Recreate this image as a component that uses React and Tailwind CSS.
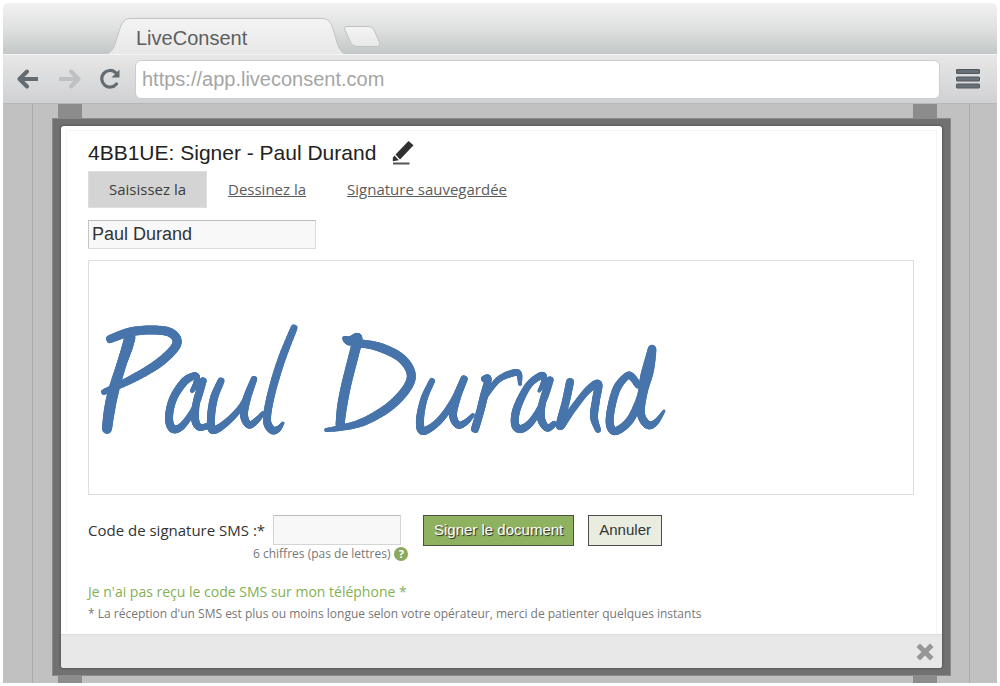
import React from "react";

// Pen samples of the signature: x, y and nib width.
const INK = [
  [[130, 337, 11], [127, 348, 11], [121, 366, 10], [113, 393, 11], [109, 413, 11], [107, 429, 10]],
  [[110, 339, 8], [130, 332, 9], [151, 330, 9], [169, 332, 9], [177, 340, 9], [173, 350, 9], [156, 365, 9], [130, 380, 8], [104, 392, 6]],
  [[192, 391, 4], [196, 384, 6], [197, 378, 6], [194, 376, 7], [184, 382, 8], [173, 399, 8], [169, 418, 8], [173, 429, 8], [183, 425, 7], [196, 405, 6], [203, 381, 7], [197, 399, 7], [195, 418, 8], [199, 427, 7], [208, 426, 6]],
  [[221, 381, 7], [214, 398, 8], [211, 418, 8], [213, 430, 8], [227, 422, 7], [243, 404, 6], [254, 379, 6], [247, 398, 8], [244, 415, 8], [249, 425, 7], [257, 420, 6], [263, 413, 4]],
  [[294, 328, 7], [281, 361, 8], [271, 395, 8], [267, 420, 8], [272, 430, 8], [278, 429, 6], [283, 423, 3]],
  [[344, 338, 3], [350, 341, 9], [357, 337, 8], [357, 342, 10], [352, 362, 10], [346, 386, 10], [342, 407, 10], [340, 425, 9]],
  [[356, 344, 9], [365, 344, 8], [382, 348, 9], [401, 358, 9], [411, 373, 9], [407, 388, 9], [389, 407, 9], [363, 422, 8], [340, 428, 6], [326, 430, 4]],
  [[432, 381, 6], [424, 399, 7], [420, 420, 8], [423, 431, 8], [438, 422, 7], [453, 402, 7], [464, 379, 7], [457, 397, 8], [453, 415, 8], [458, 425, 7], [466, 422, 6], [473, 415, 4]],
  [[484, 379, 6], [488, 379, 7], [484, 396, 8], [480, 412, 8], [475, 429, 8]],
  [[483, 399, 6], [498, 380, 6], [513, 373, 7], [519, 374, 6], [520, 384, 4]],
  [[539, 391, 3], [543, 384, 5], [544, 377, 6], [540, 376, 7], [528, 386, 7], [517, 408, 8], [515, 424, 8], [521, 429, 8], [532, 421, 7], [544, 400, 6], [550, 380, 7], [543, 400, 7], [541, 418, 8], [547, 428, 7], [554, 424, 6]],
  [[570, 382, 8], [566, 401, 8], [560, 426, 8], [572, 410, 7], [587, 391, 7], [598, 384, 8], [596, 400, 8], [594, 417, 8], [598, 430, 6]],
  [[638, 385, 7], [632, 377, 7], [627, 376, 7], [617, 388, 8], [611, 409, 8], [610, 425, 8], [616, 431, 8], [630, 420, 8], [641, 396, 8], [645, 375, 9], [652, 349, 8], [649, 370, 10], [643, 393, 9], [641, 414, 8], [648, 425, 8], [656, 422, 6], [664, 411, 3]],
];

// Catmull-Rom value between b and c.
const spline = (a, b, c, d, t) =>
  0.5 * (2 * b + (c - a) * t + (2 * a - 5 * b + 4 * c - d) * t * t + (3 * b - a - 3 * c + d) * t * t * t);

function smooth(points) {
  const out = [points[0]];
  for (let i = 0; i < points.length - 1; i++) {
    const p = [points[Math.max(0, i - 1)], points[i], points[i + 1], points[Math.min(points.length - 1, i + 2)]];
    for (let s = 1; s <= 8; s++) out.push([0, 1, 2].map((k) => spline(p[0][k], p[1][k], p[2][k], p[3][k], s / 8)));
  }
  return out;
}

function Signature() {
  return (
    <svg viewBox="89 261 824 233" preserveAspectRatio="xMinYMin meet" className="block h-[233px] w-full" role="img" aria-label="Signature" stroke="#4775ab" strokeLinecap="round">
      {INK.map((stroke, i) => (
        <g key={i}>
          {smooth(stroke).slice(1).map((p, j, all) => {
            const q = j ? all[j - 1] : stroke[0];
            return <line key={j} x1={q[0]} y1={q[1]} x2={p[0]} y2={p[1]} strokeWidth={p[2]} />;
          })}
        </g>
      ))}
    </svg>
  );
}

function TitleBar() {
  return (
    <header className="relative flex h-[51px] items-end rounded-t-[5px] bg-linear-to-b from-[#f1f2f1] via-[#dfe1e0] to-[#c3c7c7]">
      <svg className="absolute bottom-0 left-[98px]" width="290" height="40" viewBox="0 0 290 40" aria-hidden="true">
        <defs>
          <linearGradient id="tab" x1="0" y1="0" x2="0" y2="1">
            <stop offset="0" stopColor="#f4f4f4" />
            <stop offset="1" stopColor="#e8e8e8" />
          </linearGradient>
        </defs>
        <path d="M0 40.500C8 40.500 11 38 14 30L18.500 16C21 8 24 4.500 29 4.500H221C227 4.500 230 8 232 15L236.500 30C239 37 242 40.500 248 40.500" fill="url(#tab)" stroke="#c2c4c4" />
        <path d="M246 12.500H267C270 12.500 272 14 273 16L278 27C279.500 30.500 279 32.500 275 32.500H257C253 32.500 251 31 249.500 28L244 16C242.800 13.500 244 12.500 246 12.500Z" fill="url(#tab)" stroke="#bfc2c2" />
      </svg>
      <h1 className="relative pb-1 pl-[133px] text-[20px] leading-6 text-[#5c5e60]">LiveConsent</h1>
    </header>
  );
}

function Toolbar() {
  return (
    <nav className="flex h-[49px] items-center border-t border-[#f4f4f4] bg-linear-to-b from-[#e7e7e7] to-[#d0d1d3] pr-4 pl-[14px]">
      <button aria-label="Back" className="mr-[17px]">
        <svg width="24" height="22" viewBox="0 0 24 22" fill="none" stroke="#646c72" strokeWidth="4" strokeLinecap="round" strokeLinejoin="round">
          <path d="M10 3.500L2.500 11L10 18.500" /><path d="M4 11H19" strokeLinecap="square" />
        </svg>
      </button>
      <button aria-label="Forward" className="mr-4">
        <svg width="24" height="22" viewBox="0 0 24 22" fill="none" stroke="#bfc0c1" strokeWidth="4" strokeLinecap="round" strokeLinejoin="round">
          <path d="M13 3.500L20.500 11L13 18.500" /><path d="M3 11H19" strokeLinecap="square" />
        </svg>
      </button>
      <button aria-label="Reload" className="mr-[13px]">
        <svg width="24" height="22" viewBox="0 0 24 22" fill="none">
          <path d="M17.500 4.500A8.300 8.300 0 1 0 18.500 16" stroke="#646c72" strokeWidth="3.200" strokeLinecap="round" />
          <path d="M21.500 1.500V9.500H13.500Z" fill="#646c72" />
        </svg>
      </button>
      <input aria-label="Address" defaultValue="https://app.liveconsent.com" className="h-[39px] min-w-0 flex-1 rounded-[6px] border border-[#cccdce] bg-white px-1.5 text-[20px] text-[#a5a5a5] outline-none" />
      <button aria-label="Menu" className="ml-4">
        <svg width="25" height="20" viewBox="0 0 25 20" fill="#687077" stroke="#50565c">
          <rect x="0.500" y="0.500" width="23" height="4" rx="0.500" />
          <rect x="0.500" y="8" width="23" height="4" rx="0.500" />
          <rect x="0.500" y="15" width="23" height="4" rx="0.500" />
        </svg>
      </button>
    </nav>
  );
}

function SignForm() {
  return (
    <form className="flex-1 pt-[3px] pr-[22px] pl-[21px] font-['Open_Sans',sans-serif]" onSubmit={(e) => e.preventDefault()}>
      <div className="flex h-[37px] items-center gap-4 font-['Liberation_Sans',sans-serif]">
        <h2 className="text-[21px] leading-6 text-[#222]">4BB1UE: Signer - Paul Durand</h2>
        <button type="button" aria-label="Modifier">
          <svg width="22" height="25" viewBox="0 0 22 25" fill="#303030">
            <path d="M16.500 1L21.500 5.200L8 19.500L3.500 14.500Z" />
            <path d="M2.500 15.500L6.800 20.200L0.800 21.200L0.800 17.800Z" />
            <rect x="1" y="22.500" width="16.500" height="2" fill="#555" />
          </svg>
        </button>
      </div>
      <div className="flex h-[37px] items-stretch text-[15px] text-[#5c5c5c]">
        <button type="button" className="w-[119px] border border-[#dedede] bg-[#d4d4d4] text-[#3c3c3c]">Saisissez la</button>
        <a href="#draw" className="ml-[21px] self-center underline">Dessinez la</a>
        <a href="#saved" className="ml-[41px] self-center underline">Signature sauvegardée</a>
      </div>
      <input aria-label="Nom" defaultValue="Paul Durand" className="mt-3 block h-[29px] w-[228px] border border-[#dcdcdc] border-t-[#bcbcbc] border-l-[#c4c4c4] bg-[#f8f8f8] px-[3px] font-['Liberation_Sans',sans-serif] text-[18px] text-[#333] outline-none" />
      <div className="mt-[11px] border border-[#dedede]"><Signature /></div>
      <div className="mt-5 flex items-start">
        <label htmlFor="sms" className="pt-[5px] text-[15px] leading-5 text-[#333]">Code de signature SMS :*</label>
        <input id="sms" className="ml-2 h-[30px] w-32 border border-[#d4d4d4] border-t-[#bcbcbc] bg-[#f8f8f8] px-1 outline-none" />
        <button className="ml-[22px] h-[31px] w-[151px] border border-[#4b5043] bg-[#8fb261] font-['Liberation_Sans',sans-serif] text-[15px] text-white [text-shadow:1px_1px_1px_#222]">Signer le document</button>
        <button type="button" className="ml-3.5 h-[31px] w-[74px] border border-[#4c4c4c] bg-[#e9ede0] font-['Liberation_Sans',sans-serif] text-[15px] text-[#333]">Annuler</button>
      </div>
      <div className="flex items-center gap-1 pl-[165px] text-[12px] leading-4 text-[#777]">
        <span>6 chiffres (pas de lettres)</span>
        <button type="button" aria-label="Aide" className="size-3.5 rounded-full bg-[#8ba95c] text-[11px] leading-3.5 font-bold text-white">?</button>
      </div>
      <a href="#resend" className="mt-5 block text-[14px] leading-5 text-[#85b052]">Je n'ai pas reçu le code SMS sur mon téléphone *</a>
      <p className="mt-0.5 mb-2.5 text-[12px] leading-5 text-[#777]">* La réception d'un SMS est plus ou moins longue selon votre opérateur, merci de patienter quelques instants</p>
    </form>
  );
}

export default function App() {
  return (
    <div className="flex min-h-screen flex-col bg-white p-[3px] font-['Liberation_Sans',sans-serif]">
      <TitleBar />
      <Toolbar />
      <main className="flex flex-1 flex-col border-t border-[#b8b8b8] bg-[#c1c1c1] pr-[27px] pl-[29px]">
        <div className="flex flex-1 flex-col border-x border-[#acacac] pr-8 pl-[25px]">
          <div className="flex flex-1 flex-col border-x-[24px] border-[#8c8c8c] pt-3.5 pb-[7px]">
            <section className="-mr-[38px] -ml-[30px] flex flex-1 flex-col border border-[#8a8a8a] bg-[#717171] px-2 py-[7px]">
              <div className="flex flex-1 flex-col rounded-[3px] bg-white shadow-[0_0_2px_1px_#5a5a5a]">
                <div className="flex flex-1 flex-col px-[5px] pt-1">
                  <div className="flex flex-1 flex-col border border-b-0 border-[#f5f5f5]"><SignForm /></div>
                </div>
                <footer className="flex h-[34px] items-center justify-end rounded-b-[3px] border-t border-[#dcdcdc] bg-[#e8e8e8] pr-2">
                  <button aria-label="Fermer">
                    <svg width="18" height="18" viewBox="0 0 18 18" stroke="#979797" strokeWidth="5" strokeLinecap="square">
                      <path d="M4 4L14 14M14 4L4 14" />
                    </svg>
                  </button>
                </footer>
              </div>
            </section>
          </div>
        </div>
      </main>
    </div>
  );
}
